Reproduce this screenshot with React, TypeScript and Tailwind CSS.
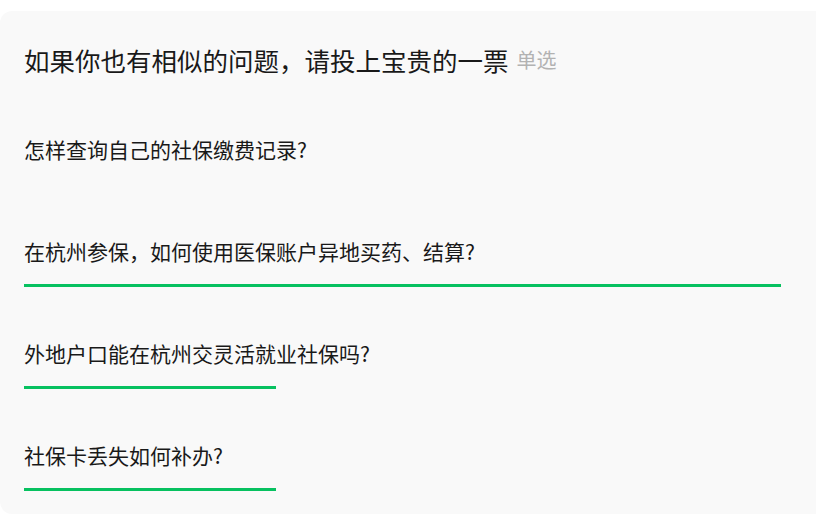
export default function App() {
  const items = [
    { q: "怎样查询自己的社保缴费记录?", w: 0 },
    { q: "在杭州参保，如何使用医保账户异地买药、结算?", w: 757 },
    { q: "外地户口能在杭州交灵活就业社保吗?", w: 252 },
    { q: "社保卡丢失如何补办?", w: 252 },
  ];
  return (
    <div
      className="w-[816px] h-[525px] overflow-hidden bg-white pt-[11px]"
      style={{ fontFamily: '"Microsoft YaHei", "Noto Sans CJK SC", "Noto Sans", sans-serif' }}
    >
      <div className="w-[840px] h-[503px] rounded-[12px] bg-[#f9f9f9] px-[24px] pt-[31px]">
        <div className="flex items-center h-[36px]">
          <span className="text-[25.5px] leading-[36px] text-[#191919]">如果你也有相似的问题，请投上宝贵的一票</span>
          <span className="ml-[8px] text-[20px] leading-[36px] text-[#b2b2b2]">单选</span>
        </div>
        <div className="mt-[57px] flex flex-col">
          {items.map((it, i) => (
            <div key={i} className="h-[102px]">
              <div className="text-[21px] leading-[28px] text-[#191919]">{it.q}</div>
              <div className="mt-[19px] h-[3px] bg-[#07c160]" style={{ width: it.w }} />
            </div>
          ))}
        </div>
      </div>
    </div>
  );
}
